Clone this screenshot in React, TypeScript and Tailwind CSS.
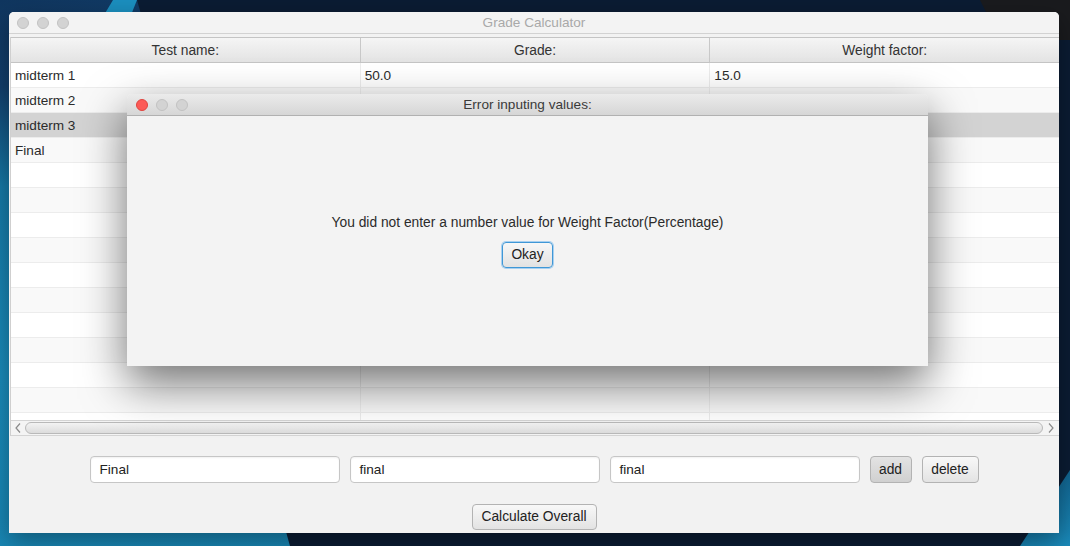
import React from "react";

const FONT = "font-['Liberation_Sans',Arial,sans-serif]";

type Row = { name: string; grade: string; weight: string };

const rows: Row[] = [
  { name: "midterm 1", grade: "50.0", weight: "15.0" },
  { name: "midterm 2", grade: "", weight: "" },
  { name: "midterm 3", grade: "", weight: "" },
  { name: "Final", grade: "", weight: "" },
];

function Light({ color }: { color: "red" | "gray" }) {
  return (
    <div
      className={
        color === "red"
          ? "w-[12px] h-[12px] rounded-full bg-[#fc5b57] border border-[#e0443e]"
          : "w-[12px] h-[12px] rounded-full bg-[#d3d3d3] border border-[#c2c2c2]"
      }
    />
  );
}

function Chevron({ dir }: { dir: "left" | "right" }) {
  return (
    <svg width="8" height="12" viewBox="0 0 8 12" fill="none">
      <path
        d={dir === "left" ? "M6 1.5 L2 6 L6 10.5" : "M2 1.5 L6 6 L2 10.5"}
        stroke="#8a8a8a"
        strokeWidth="1.2"
      />
    </svg>
  );
}

function MacButton({ label, dark, w }: { label: string; dark?: boolean; w: string }) {
  return (
    <div
      className={`${w} rounded-[4px] border border-[#b3b3b3] flex items-center justify-center pt-[1px] text-[13.8px] text-[#222] ${
        dark
          ? "bg-[linear-gradient(#e3e3e3,#d0d0d0)]"
          : "bg-[linear-gradient(#f8f8f8,#e3e3e3)]"
      }`}
    >
      {label}
    </div>
  );
}

export default function App() {
  const bodyRows = Array.from({ length: 15 }, (_, i) => rows[i] ?? { name: "", grade: "", weight: "" });
  return (
    <div className={`relative w-[1070px] h-[546px] overflow-hidden bg-[#0b1c33] ${FONT}`}>
      {/* wallpaper */}
      <div className="absolute left-0 top-0 w-[300px] h-[546px] [clip-path:polygon(0_0,137px_0,290px_546px,0_546px)] bg-[linear-gradient(165deg,#10365f_0%,#123f6c_14%,#1679a6_30%,#1a8bba_60%,#1884b1_100%)]" />
      <div className="absolute left-[95px] top-0 w-[60px] h-[30px] [clip-path:polygon(18px_0,42px_0,30px_30px,0_30px)] bg-[#1b8fbf]" />
      <div className="absolute left-[980px] top-0 w-[90px] h-[40px] [clip-path:polygon(0_0,90px_0,90px_40px,20px_40px)] bg-[#1a1b1e]" />
      <div className="absolute left-[1020px] top-[470px] w-[50px] h-[76px] [clip-path:polygon(50px_0,50px_76px,0_76px)] bg-[linear-gradient(160deg,#0f5a85,#1a8bbb)]" />

      {/* main window */}
      <div className="absolute left-[9px] top-[12px] w-[1050px] h-[521px] rounded-t-[5px] bg-[#f2f2f2] flex flex-col shadow-[0_8px_24px_rgba(0,0,0,0.35)] overflow-hidden">
        {/* title bar */}
        <div className="relative h-[22px] bg-[#f3f3f3] border-b border-[#d2d2d2] flex items-center">
          <div className="flex gap-[8px] pl-[8px]">
            <Light color="gray" />
            <Light color="gray" />
            <Light color="gray" />
          </div>
          <div className="absolute inset-0 flex items-center justify-center pt-[1px] text-[13.6px] text-[#a9a9a9]">
            Grade Calculator
          </div>
        </div>
        <div className="h-[3px]" />
        {/* table */}
        <div className="flex flex-col ml-[1px] border-l border-[#cfcfcf]">
          <div className="flex h-[26px] border-t border-b border-[#c4c4c4] bg-[linear-gradient(#f5f5f5,#e3e3e3)]">
            {["Test name:", "Grade:", "Weight factor:"].map((h, i) => (
              <div
                key={h}
                className={`flex-1 flex items-center justify-center pt-[2px] text-[13.8px] text-[#333] ${
                  i < 2 ? "border-r border-[#c8c8c8]" : ""
                }`}
              >
                {h}
              </div>
            ))}
          </div>
          <div className="h-[357px] overflow-hidden flex flex-col">
            {bodyRows.map((r, i) => {
              const selected = i === 2;
              const bg = selected ? "bg-[#d3d3d3]" : i % 2 === 0 ? "bg-white" : "bg-[#f9f9f9]";
              return (
                <div key={i} className={`flex h-[25px] shrink-0 border-b border-[#ececec] ${bg}`}>
                  {[r.name, r.grade, r.weight].map((c, j) => (
                    <div
                      key={j}
                      className={`flex-1 flex items-center pl-[4px] pt-[3px] text-[13.6px] text-[#2b2b2b] ${
                        j < 2 ? (selected ? "border-r border-[#d3d3d3]" : "border-r border-[#ececec]") : ""
                      }`}
                    >
                      {c}
                    </div>
                  ))}
                </div>
              );
            })}
          </div>
          {/* scrollbar */}
          <div className="h-[16px] border-t border-b border-[#d4d4d4] bg-[#f4f4f4] flex items-center">
            <div className="w-[14px] flex items-center justify-center">
              <Chevron dir="left" />
            </div>
            <div className="flex-1 h-[12px] rounded-[6px] border border-[#b9b9b9] bg-[linear-gradient(#f3f3f3,#dcdcdc)]" />
            <div className="w-[16px] flex items-center justify-center">
              <Chevron dir="right" />
            </div>
          </div>
        </div>
        {/* form */}
        <div className="flex flex-col items-center pt-[20px]">
          <div className="flex items-center gap-[10px]">
            {["Final", "final", "final"].map((v, i) => (
              <div
                key={i}
                className="w-[250px] h-[27px] rounded-[4px] border border-[#c6c6c6] bg-white flex items-center pl-[9px] pt-[1px] text-[13.6px] text-[#222] shadow-[inset_0_1px_2px_rgba(0,0,0,0.06)]"
              >
                {v}
              </div>
            ))}
            <MacButton label="add" dark w="w-[42px] h-[27px]" />
            <MacButton label="delete" w="w-[57px] h-[27px]" />
          </div>
          <div className="mt-[21px]">
            <MacButton label="Calculate Overall" w="w-[125px] h-[26px]" />
          </div>
        </div>
      </div>

      {/* dialog */}
      <div className="absolute left-[127px] top-[94px] w-[801px] h-[272px] rounded-t-[5px] bg-[#f3f3f3] flex flex-col shadow-[0_18px_45px_rgba(0,0,0,0.55)]">
        <div className="relative h-[22px] rounded-t-[5px] bg-[linear-gradient(#ebebeb,#d6d6d6)] border-b border-[#b1b1b1] flex items-center">
          <div className="flex gap-[8px] pl-[9px]">
            <Light color="red" />
            <Light color="gray" />
            <Light color="gray" />
          </div>
          <div className="absolute inset-0 flex items-center justify-center pt-[1px] text-[13.6px] text-[#3a3a3a]">
            Error inputing values:
          </div>
        </div>
        <div className="flex-1 flex flex-col items-center justify-center gap-[11px]">
          <div className="text-[13.8px] leading-[16px] text-[#2b2b2b]">
            You did not enter a number value for Weight Factor(Percentage)
          </div>
          <div className="w-[51px] h-[26px] rounded-[4px] border border-[#3f97d6] shadow-[0_0_0_1px_#a8d0f0] bg-[linear-gradient(#f7f7f7,#e2e2e2)] flex items-center justify-center pt-[1px] text-[13.8px] text-[#222]">
            Okay
          </div>
        </div>
      </div>
    </div>
  );
}
